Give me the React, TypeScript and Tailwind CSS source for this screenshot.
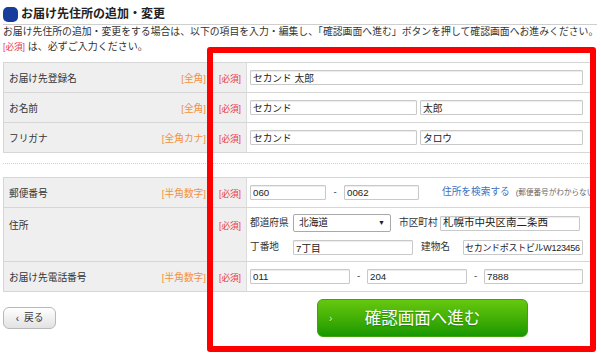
import type { ReactNode } from "react";

type RowProps = {
  label: string;
  tag?: string;
  top?: boolean;
  height: string;
  children: ReactNode;
};

function Row({ label, tag, top, height, children }: RowProps) {
  return (
    <div className={`flex border-t border-[#d6d6d6] ${height}`}>
      <div
        className={`flex w-[242px] shrink-0 bg-[#efefef] pl-[5px] pr-[4px] ${
          top ? "items-start pt-[11px]" : "items-center pt-[2px]"
        }`}
      >
        <span className="flex-1 text-[9.7px] leading-[14px] text-[#333]">
          {label}
        </span>
        {tag && (
          <span className="text-[9.7px] leading-[14px] text-[#f3923c]">
            {tag}
          </span>
        )}
        <span className="ml-[13px] w-[23px] text-[8.6px] leading-[14px] text-[#e8383d]">
          [必須]
        </span>
      </div>
      <div className="flex-1 border-l border-[#dcdcdc] bg-white pl-[3px]">
        {children}
      </div>
    </div>
  );
}

function Field({
  value,
  width,
  big,
}: {
  value: string;
  width: string;
  big?: boolean;
}) {
  return (
    <input
      readOnly
      value={value}
      className={`h-[15px] ${width} rounded-[1px] border border-[#c9c9c9] bg-white px-[2px] text-[#222] outline-none shadow-[inset_0_1px_1px_rgba(0,0,0,0.08)] ${
        big ? "text-[10.5px]" : "text-[9.7px]"
      }`}
    />
  );
}

export default function App() {
  return (
    <div className="relative h-[358px] w-[601px] overflow-hidden bg-white font-['Liberation_Sans','Noto_Sans_CJK_JP',sans-serif]">
      <div className="pl-[3px] pt-[7px]">
        <div className="mr-[4px] flex h-[18px] items-start gap-[3px] border-b border-[#cfcfcf]">
          <span className="h-[15px] w-[15px] rounded-[5px] bg-[#163c9c]" />
          <h1 className="text-[12px] font-bold leading-[15px] text-[#222]">
            お届け先住所の追加・変更
          </h1>
        </div>

        <p className="whitespace-nowrap text-[9.85px] leading-[14px] text-[#333]">
          お届け先住所の追加・変更をする場合は、以下の項目を入力・編集し、「確認画面へ進む」ボタンを押して確認画面へお進みください。
        </p>
        <p className="mt-[1px] text-[10px] leading-[14px] text-[#333]">
          <span className="text-[8.6px] text-[#e8383d]">[必須]</span>{" "}
          は、必ずご入力ください。
        </p>

        <div className="mt-[8px] w-[587px] overflow-hidden border-b border-l border-[#d6d6d6]">
          <Row label="お届け先登録名" tag="[全角]" height="h-[30px]">
            <div className="flex h-full items-center">
              <Field value="セカンド 太郎" width="w-[333px]" />
            </div>
          </Row>
          <Row label="お名前" tag="[全角]" height="h-[30px]">
            <div className="flex h-full items-center gap-[3px]">
              <Field value="セカンド" width="w-[167px]" />
              <Field value="太郎" width="w-[163px]" />
            </div>
          </Row>
          <Row label="フリガナ" tag="[全角カナ]" height="h-[30px]">
            <div className="flex h-full items-center gap-[3px]">
              <Field value="セカンド" width="w-[167px]" />
              <Field value="タロウ" width="w-[163px]" />
            </div>
          </Row>
        </div>

        <div className="mt-[10px] w-[587px] border-t border-dotted border-[#d0d0d0]" />

        <div className="mt-[13px] w-[587px] overflow-hidden border-b border-l border-[#d6d6d6]">
          <Row label="郵便番号" tag="[半角数字]" height="h-[30px]">
            <div className="flex h-full items-center whitespace-nowrap">
              <Field value="060" width="w-[76px]" />
              <span className="w-[18px] text-center text-[9.7px] text-[#333]">
                -
              </span>
              <Field value="0062" width="w-[75px]" />
              <a className="ml-[23px] text-[9.7px] text-[#3d6fc4]">
                住所を検索する
              </a>
              <span className="ml-[6px] text-[7.6px] text-[#666]">
                (郵便番号がわからない場合
              </span>
            </div>
          </Row>
          <Row label="住所" top height="h-[54px]">
            <div className="flex flex-col gap-[8px] pt-[6px] text-[9.7px] text-[#333]">
              <div className="flex h-[18px] items-center whitespace-nowrap">
                <span className="w-[43px]">都道府県</span>
                <div className="flex h-[18px] w-[98px] items-center justify-between rounded-[2px] border border-[#a9a9a9] bg-white pl-[5px] pr-[5px] text-[9.7px] text-[#222]">
                  <span>北海道</span>
                  <span className="text-[7px]">▼</span>
                </div>
                <span className="ml-[8px] w-[41px]">市区町村</span>
                <Field value="札幌市中央区南二条西" width="w-[140px]" big />
              </div>
              <div className="flex h-[15px] items-center whitespace-nowrap">
                <span className="w-[43px]">丁番地</span>
                <Field value="7丁目" width="w-[120px]" />
                <span className="ml-[8px] w-[42px]">建物名</span>
                <input
                  readOnly
                  value="セカンドポストビルW123456"
                  className="h-[15px] w-[120px] rounded-[1px] border border-[#c9c9c9] bg-white px-[1px] text-[9px] tracking-[-0.3px] text-[#222] outline-none"
                />
              </div>
            </div>
          </Row>
          <Row label="お届け先電話番号" tag="[半角数字]" height="h-[30px]">
            <div className="flex h-full items-center">
              <Field value="011" width="w-[100px]" />
              <span className="w-[17px] text-center text-[9.7px] text-[#333]">
                -
              </span>
              <Field value="204" width="w-[100px]" />
              <span className="w-[17px] text-center text-[9.7px] text-[#333]">
                -
              </span>
              <Field value="7888" width="w-[99px]" />
            </div>
          </Row>
        </div>

        <div className="mt-[7px] flex items-center">
          <button className="flex h-[22px] w-[53px] items-center justify-center gap-[5px] rounded-[6px] border border-[#b8b8b8] bg-gradient-to-b from-white to-[#e2e2e2] text-[9.7px] text-[#333]">
            <span className="text-[10px]">‹</span>
            <span>戻る</span>
          </button>
          <button className="relative ml-[261px] flex h-[38px] w-[211px] items-center justify-center rounded-[6px] border border-[#3fa10e] bg-gradient-to-b from-[#66c80f] to-[#139800] text-[16.5px] text-white [text-shadow:0_1px_1px_rgba(0,80,0,0.35)]">
            <span className="absolute left-[11px] text-[10px] text-[#d8f2c4]">
              ›
            </span>
            確認画面へ進む
          </button>
        </div>
      </div>

      <div className="absolute left-[207px] top-[47px] h-[305px] w-[389px] rounded-[3px] border-[6px] border-[#ff0000]" />
    </div>
  );
}
